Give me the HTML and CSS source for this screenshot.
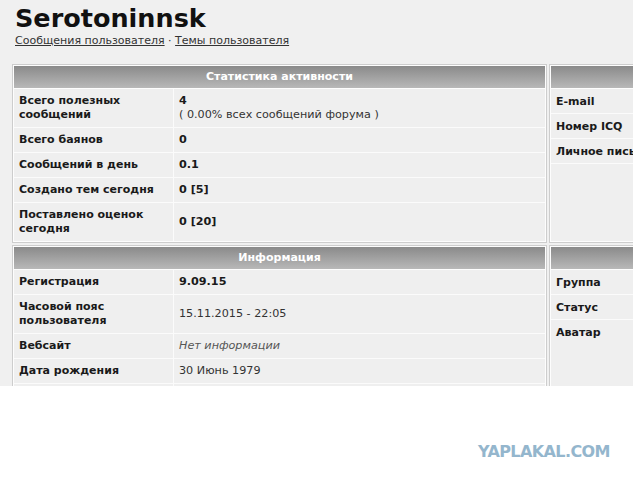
FILE: index.html
```html
<!DOCTYPE html>
<html lang="ru">
<head>
  <meta charset="UTF-8">
  <title>Serotoninnsk</title>
  <link rel="stylesheet" href="styles.css">
</head>
<body>

  <div class="shot">
    <h1>Serotoninnsk</h1>
    <div class="user-links">
      <a href="#">Сообщения пользователя</a> · <a href="#">Темы пользователя</a>
    </div>

    <div class="profile">
      <!-- Статистика -->
      <div class="box">
        <div class="box-head">Статистика активности</div>
        <div class="row">
          <div class="label">Всего полезных сообщений</div>
          <div class="value"><b>4</b><br>( 0.00% всех сообщений форума )</div>
        </div>
        <div class="row">
          <div class="label">Всего баянов</div>
          <div class="value"><b>0</b></div>
        </div>
        <div class="row">
          <div class="label">Сообщений в день</div>
          <div class="value"><b>0.1</b></div>
        </div>
        <div class="row">
          <div class="label">Создано тем сегодня</div>
          <div class="value"><b>0 [5]</b></div>
        </div>
        <div class="row">
          <div class="label">Поставлено оценок сегодня</div>
          <div class="value"><b>0 [20]</b></div>
        </div>
      </div>

      <div class="box side">
        <div class="box-head">&nbsp;</div>
        <div class="row">
          <div class="label">E-mail</div>
        </div>
        <div class="row">
          <div class="label">Номер ICQ</div>
        </div>
        <div class="row">
          <div class="label">Личное пись</div>
        </div>
        <div class="row filler"></div>
      </div>

      <!-- Информация -->
      <div class="box">
        <div class="box-head">Информация</div>
        <div class="row">
          <div class="label">Регистрация</div>
          <div class="value"><b>9.09.15</b></div>
        </div>
        <div class="row">
          <div class="label">Часовой пояс пользователя</div>
          <div class="value">15.11.2015 - 22:05</div>
        </div>
        <div class="row">
          <div class="label">Вебсайт</div>
          <div class="value"><i>Нет информации</i></div>
        </div>
        <div class="row">
          <div class="label">Дата рождения</div>
          <div class="value">30 Июнь 1979</div>
        </div>
        <div class="row">
          <div class="label">&nbsp;</div>
          <div class="value">&nbsp;</div>
        </div>
      </div>

      <div class="box side">
        <div class="box-head">&nbsp;</div>
        <div class="row">
          <div class="label">Группа</div>
        </div>
        <div class="row">
          <div class="label">Статус</div>
        </div>
        <div class="row filler">
          <div class="label">Аватар</div>
        </div>
      </div>
    </div>
  </div>

  <div class="watermark">YAPLAKAL.COM</div>

</body>
</html>
```

FILE: styles.css
```css
* {
  box-sizing: border-box;
}

body {
  margin: 0;
  background: #fff;
  font-family: 'DejaVu Sans', Verdana, sans-serif;
  font-size: 11px;
  color: #222;
  height: 482px;
  overflow: hidden;
}

.shot {
  width: 633px;
  height: 386px;
  overflow: hidden;
  background: #f0f0f0;
  padding: 4px 0 0 12px;
}

h1 {
  margin: 0 0 0 3px;
  font-size: 25.5px;
  line-height: 28px;
  font-weight: bold;
  color: #111;
}

.user-links {
  margin: 2px 0 0 3px;
  font-size: 11px;
  color: #333;
}

.user-links a {
  color: #333;
}

.profile {
  display: grid;
  grid-template-columns: 535px 200px;
  grid-gap: 2px 2px;
  margin-top: 17px;
}

.box {
  display: flex;
  flex-direction: column;
  border: 1px solid #cdcdcd;
  background: #fdfdfd;
  padding: 1px;
}

.box-head {
  height: 22px;
  line-height: 22px;
  text-align: center;
  color: #fff;
  font-weight: bold;
  background: linear-gradient(#8a8a8a, #b8b8b8);
  margin-bottom: 1px;
}

.row {
  display: grid;
  grid-template-columns: 160px 1fr;
  background: #efefef;
  border-bottom: 1px solid #fbfbfb;
}

.row:last-child {
  border-bottom: none;
}

.label, .value {
  display: flex;
  flex-direction: column;
  justify-content: center;
  padding: 5px;
  line-height: 14px;
}

.label {
  font-weight: bold;
  color: #1a1a1a;
  border-right: 1px solid #fbfbfb;
}

.value {
  display: block;
  align-self: center;
  color: #333;
  font-size: 11.2px;
}

.value b {
  color: #1a1a1a;
}

.value i {
  color: #555;
}

.side .row {
  grid-template-columns: 1fr;
}

.side .label {
  border-right: none;
  padding-top: 6px;
  padding-bottom: 4px;
}

.filler {
  flex: 1;
  align-items: start;
}

.watermark {
  position: absolute;
  left: 478px;
  top: 442px;
  font-family: 'DejaVu Sans', sans-serif;
  font-weight: bold;
  font-size: 16px;
  letter-spacing: -0.6px;
  color: #94b6cd;
}
```
